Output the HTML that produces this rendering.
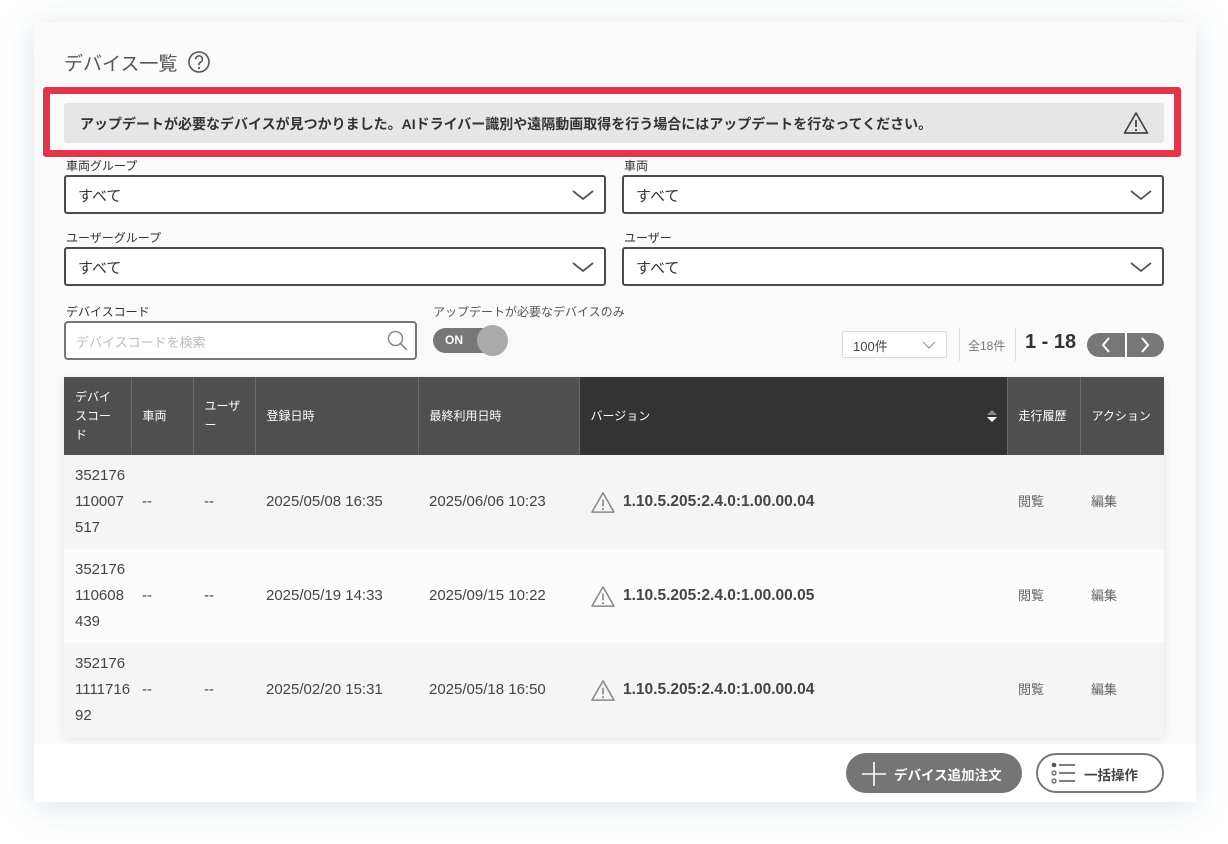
<!DOCTYPE html>
<html><head><meta charset="utf-8"><style>
*{box-sizing:border-box;margin:0;padding:0}
body{width:1228px;height:844px;background:#fff;font-family:"Liberation Sans","Noto Sans CJK JP",sans-serif;position:relative;overflow:hidden;color:#333}
.card{position:absolute;left:34px;top:22px;width:1162px;height:780px;background:#fafafa;box-shadow:0 4px 30px rgba(120,160,180,.28)}
.a{position:absolute}
.lbl{font-size:12px;color:#333}
.sel{position:absolute;height:39px;border:2px solid #4a4a4a;border-radius:3px;background:#fff;font-size:15px;padding:8px 12px;color:#333}
.chev{position:absolute;right:10px;top:11px}
table{position:absolute;left:64px;top:377px;width:1100px;border-collapse:collapse;table-layout:fixed;font-size:14px;box-shadow:0 2px 10px rgba(0,0,0,.08)}
th{background:#4f4f4f;color:#fff;font-weight:normal;font-size:12px;text-align:left;padding:0 11px;height:78px;border-right:1px solid #6a6a6a;line-height:19px}
th.v{background:#333}
td{height:94px;padding:0 11px;color:#444;font-size:15px;line-height:26px;white-space:nowrap}
tr.o td{background:#f5f5f5}
tr.e td{background:#fcfcfc}
td.sm{font-size:13px;color:#666}
.ver{font-weight:bold;font-size:15.5px;color:#444;display:flex;align-items:center;gap:7px}
</style></head><body>
<div class="card"></div>
<div class="a" style="left:64px;top:49px;font-size:19px;color:#555">デバイス一覧</div>
<svg class="a" style="left:187px;top:50px" width="24" height="24" viewBox="0 0 24 24"><circle cx="12" cy="12" r="10" fill="none" stroke="#555" stroke-width="1.6"/><path d="M8.6 9.3a3.4 3.4 0 1 1 4.8 3.1c-1 .5-1.4 1.1-1.4 2.2v.6" fill="none" stroke="#555" stroke-width="1.6"/><circle cx="12" cy="18" r="1.1" fill="#555"/></svg>
<div class="a" style="left:43px;top:87px;width:1138px;height:70px;border:7px solid #e0354b;border-radius:3px;background:#fafafa"></div>
<div class="a" style="left:64px;top:103px;width:1100px;height:40px;background:#e6e6e6;border-radius:3px;font-size:14px;font-weight:bold;color:#333;padding:11px 16px;white-space:nowrap">アップデートが必要なデバイスが見つかりました。AIドライバー識別や遠隔動画取得を行う場合にはアップデートを行なってください。</div>
<svg class="a" style="left:1123px;top:111px" width="26" height="24" viewBox="0 0 26 24"><path d="M13 2 L24.5 22 H1.5 Z" fill="none" stroke="#444" stroke-width="1.7" stroke-linejoin="round"/><path d="M13 9v7" stroke="#444" stroke-width="1.8"/><circle cx="13" cy="19" r="1.1" fill="#444"/></svg>
<div class="a lbl" style="left:66px;top:157px">車両グループ</div>
<div class="a lbl" style="left:624px;top:157px">車両</div>
<div class="sel" style="left:64px;top:175px;width:542px">すべて<svg class="chev" width="22" height="14"><path d="M1 3l10 8 10-8" fill="none" stroke="#555" stroke-width="1.8"/></svg></div>
<div class="sel" style="left:622px;top:175px;width:542px">すべて<svg class="chev" width="22" height="14"><path d="M1 3l10 8 10-8" fill="none" stroke="#555" stroke-width="1.8"/></svg></div>
<div class="a lbl" style="left:66px;top:229px">ユーザーグループ</div>
<div class="a lbl" style="left:624px;top:229px">ユーザー</div>
<div class="sel" style="left:64px;top:247px;width:542px">すべて<svg class="chev" width="22" height="14"><path d="M1 3l10 8 10-8" fill="none" stroke="#555" stroke-width="1.8"/></svg></div>
<div class="sel" style="left:622px;top:247px;width:542px">すべて<svg class="chev" width="22" height="14"><path d="M1 3l10 8 10-8" fill="none" stroke="#555" stroke-width="1.8"/></svg></div>
<div class="a lbl" style="left:66px;top:303px">デバイスコード</div>
<div class="a" style="left:64px;top:321px;width:353px;height:39px;border:2px solid #777;border-radius:4px;background:#fff;font-size:13px;color:#bbb;padding:9px 10px">デバイスコードを検索</div>
<svg class="a" style="left:386px;top:329px" width="24" height="24"><circle cx="9.5" cy="9.5" r="7" fill="none" stroke="#888" stroke-width="1.5"/><path d="M14.5 14.5L21 21" stroke="#888" stroke-width="1.6"/></svg>
<div class="a lbl" style="left:433px;top:303px;color:#555">アップデートが必要なデバイスのみ</div>
<div class="a" style="left:433px;top:328px;width:72px;height:25px;border-radius:13px;background:#777;color:#fff;font-size:12px;font-weight:bold;padding:5px 12px">ON</div>
<div class="a" style="left:477px;top:325px;width:31px;height:31px;border-radius:50%;background:#aaa"></div>
<div class="a" style="left:842px;top:331px;width:105px;height:27px;border:1.5px solid #ddd;border-radius:2px;background:#fff;font-size:13px;color:#444;padding:4px 10px">100件<svg style="position:absolute;right:10px;top:9px" width="14" height="9"><path d="M1 1l6 6 6-6" fill="none" stroke="#999" stroke-width="1.2"/></svg></div>
<div class="a" style="left:959px;top:328px;width:1px;height:33px;background:#ddd"></div>
<div class="a" style="left:968px;top:337px;font-size:12px;color:#777">全18件</div>
<div class="a" style="left:1015px;top:328px;width:1px;height:33px;background:#ddd"></div>
<div class="a" style="left:1025px;top:331px;font-size:20px;font-weight:bold;color:#333">1 - 18</div>
<div class="a" style="left:1087px;top:333px;width:77px;height:24px;border-radius:12px;background:#777"></div>
<div class="a" style="left:1125px;top:333px;width:1.5px;height:24px;background:#fff"></div>
<svg class="a" style="left:1100px;top:337px" width="12" height="16"><path d="M9 1L3 8l6 7" fill="none" stroke="#fff" stroke-width="2"/></svg>
<svg class="a" style="left:1139px;top:337px" width="12" height="16"><path d="M3 1l6 7-6 7" fill="none" stroke="#fff" stroke-width="2"/></svg>
<table>
<colgroup><col style="width:67px"><col style="width:62px"><col style="width:62px"><col style="width:163px"><col style="width:161px"><col style="width:428px"><col style="width:73px"><col style="width:84px"></colgroup>
<tr><th>デバイ<br>スコー<br>ド</th><th>車両</th><th>ユーザ<br>ー</th><th>登録日時</th><th>最終利用日時</th><th class="v" style="position:relative">バージョン<svg style="position:absolute;right:10px;top:32px" width="10" height="14"><path d="M5 1L10 6H0Z" fill="#888"/><path d="M5 13L10 8H0Z" fill="#fff"/></svg></th><th>走行履歴</th><th style="border-right:none;white-space:nowrap">アクション</th></tr>
<tr class="o"><td>352176<br>110007<br>517</td><td>--</td><td>--</td><td>2025/05/08 16:35</td><td>2025/06/06 10:23</td><td><div class="ver"><svg width="26" height="23" viewBox="0 0 26 24"><path d="M13 2 L24.5 22 H1.5 Z" fill="none" stroke="#888" stroke-width="1.6" stroke-linejoin="round"/><path d="M13 9v7" stroke="#888" stroke-width="1.7"/><circle cx="13" cy="19" r="1.1" fill="#888"/></svg>1.10.5.205:2.4.0:1.00.00.04</div></td><td class="sm">閲覧</td><td class="sm">編集</td></tr>
<tr class="e"><td>352176<br>110608<br>439</td><td>--</td><td>--</td><td>2025/05/19 14:33</td><td>2025/09/15 10:22</td><td><div class="ver"><svg width="26" height="23" viewBox="0 0 26 24"><path d="M13 2 L24.5 22 H1.5 Z" fill="none" stroke="#888" stroke-width="1.6" stroke-linejoin="round"/><path d="M13 9v7" stroke="#888" stroke-width="1.7"/><circle cx="13" cy="19" r="1.1" fill="#888"/></svg>1.10.5.205:2.4.0:1.00.00.05</div></td><td class="sm">閲覧</td><td class="sm">編集</td></tr>
<tr class="o"><td>352176<br>1111716<br>92</td><td>--</td><td>--</td><td>2025/02/20 15:31</td><td>2025/05/18 16:50</td><td><div class="ver"><svg width="26" height="23" viewBox="0 0 26 24"><path d="M13 2 L24.5 22 H1.5 Z" fill="none" stroke="#888" stroke-width="1.6" stroke-linejoin="round"/><path d="M13 9v7" stroke="#888" stroke-width="1.7"/><circle cx="13" cy="19" r="1.1" fill="#888"/></svg>1.10.5.205:2.4.0:1.00.00.04</div></td><td class="sm">閲覧</td><td class="sm">編集</td></tr>
</table>
<div class="a" style="left:34px;top:744px;width:1162px;height:58px;background:#fff"></div>
<div class="a" style="left:846px;top:753px;width:176px;height:40px;border-radius:20px;background:#757575;color:#fff;font-size:13.5px;font-weight:bold;padding:11px 0 0 48px">デバイス追加注文</div>
<svg class="a" style="left:861px;top:761px" width="26" height="26"><path d="M13 1v24M1 13h24" stroke="#fff" stroke-width="1.6"/></svg>
<div class="a" style="left:1036px;top:753px;width:128px;height:40px;border-radius:20px;border:2px solid #777;background:#fff;color:#444;font-size:13.5px;font-weight:bold;padding:9px 0 0 46px">一括操作</div>
<svg class="a" style="left:1051px;top:762px" width="26" height="22"><circle cx="3" cy="3" r="2.3" fill="#555"/><circle cx="3" cy="11" r="2" fill="none" stroke="#555" stroke-width="1.2"/><circle cx="3" cy="19" r="2" fill="none" stroke="#555" stroke-width="1.2"/><path d="M8 3h16M8 11h16M8 19h16" stroke="#555" stroke-width="1.5"/></svg>
</body></html>
